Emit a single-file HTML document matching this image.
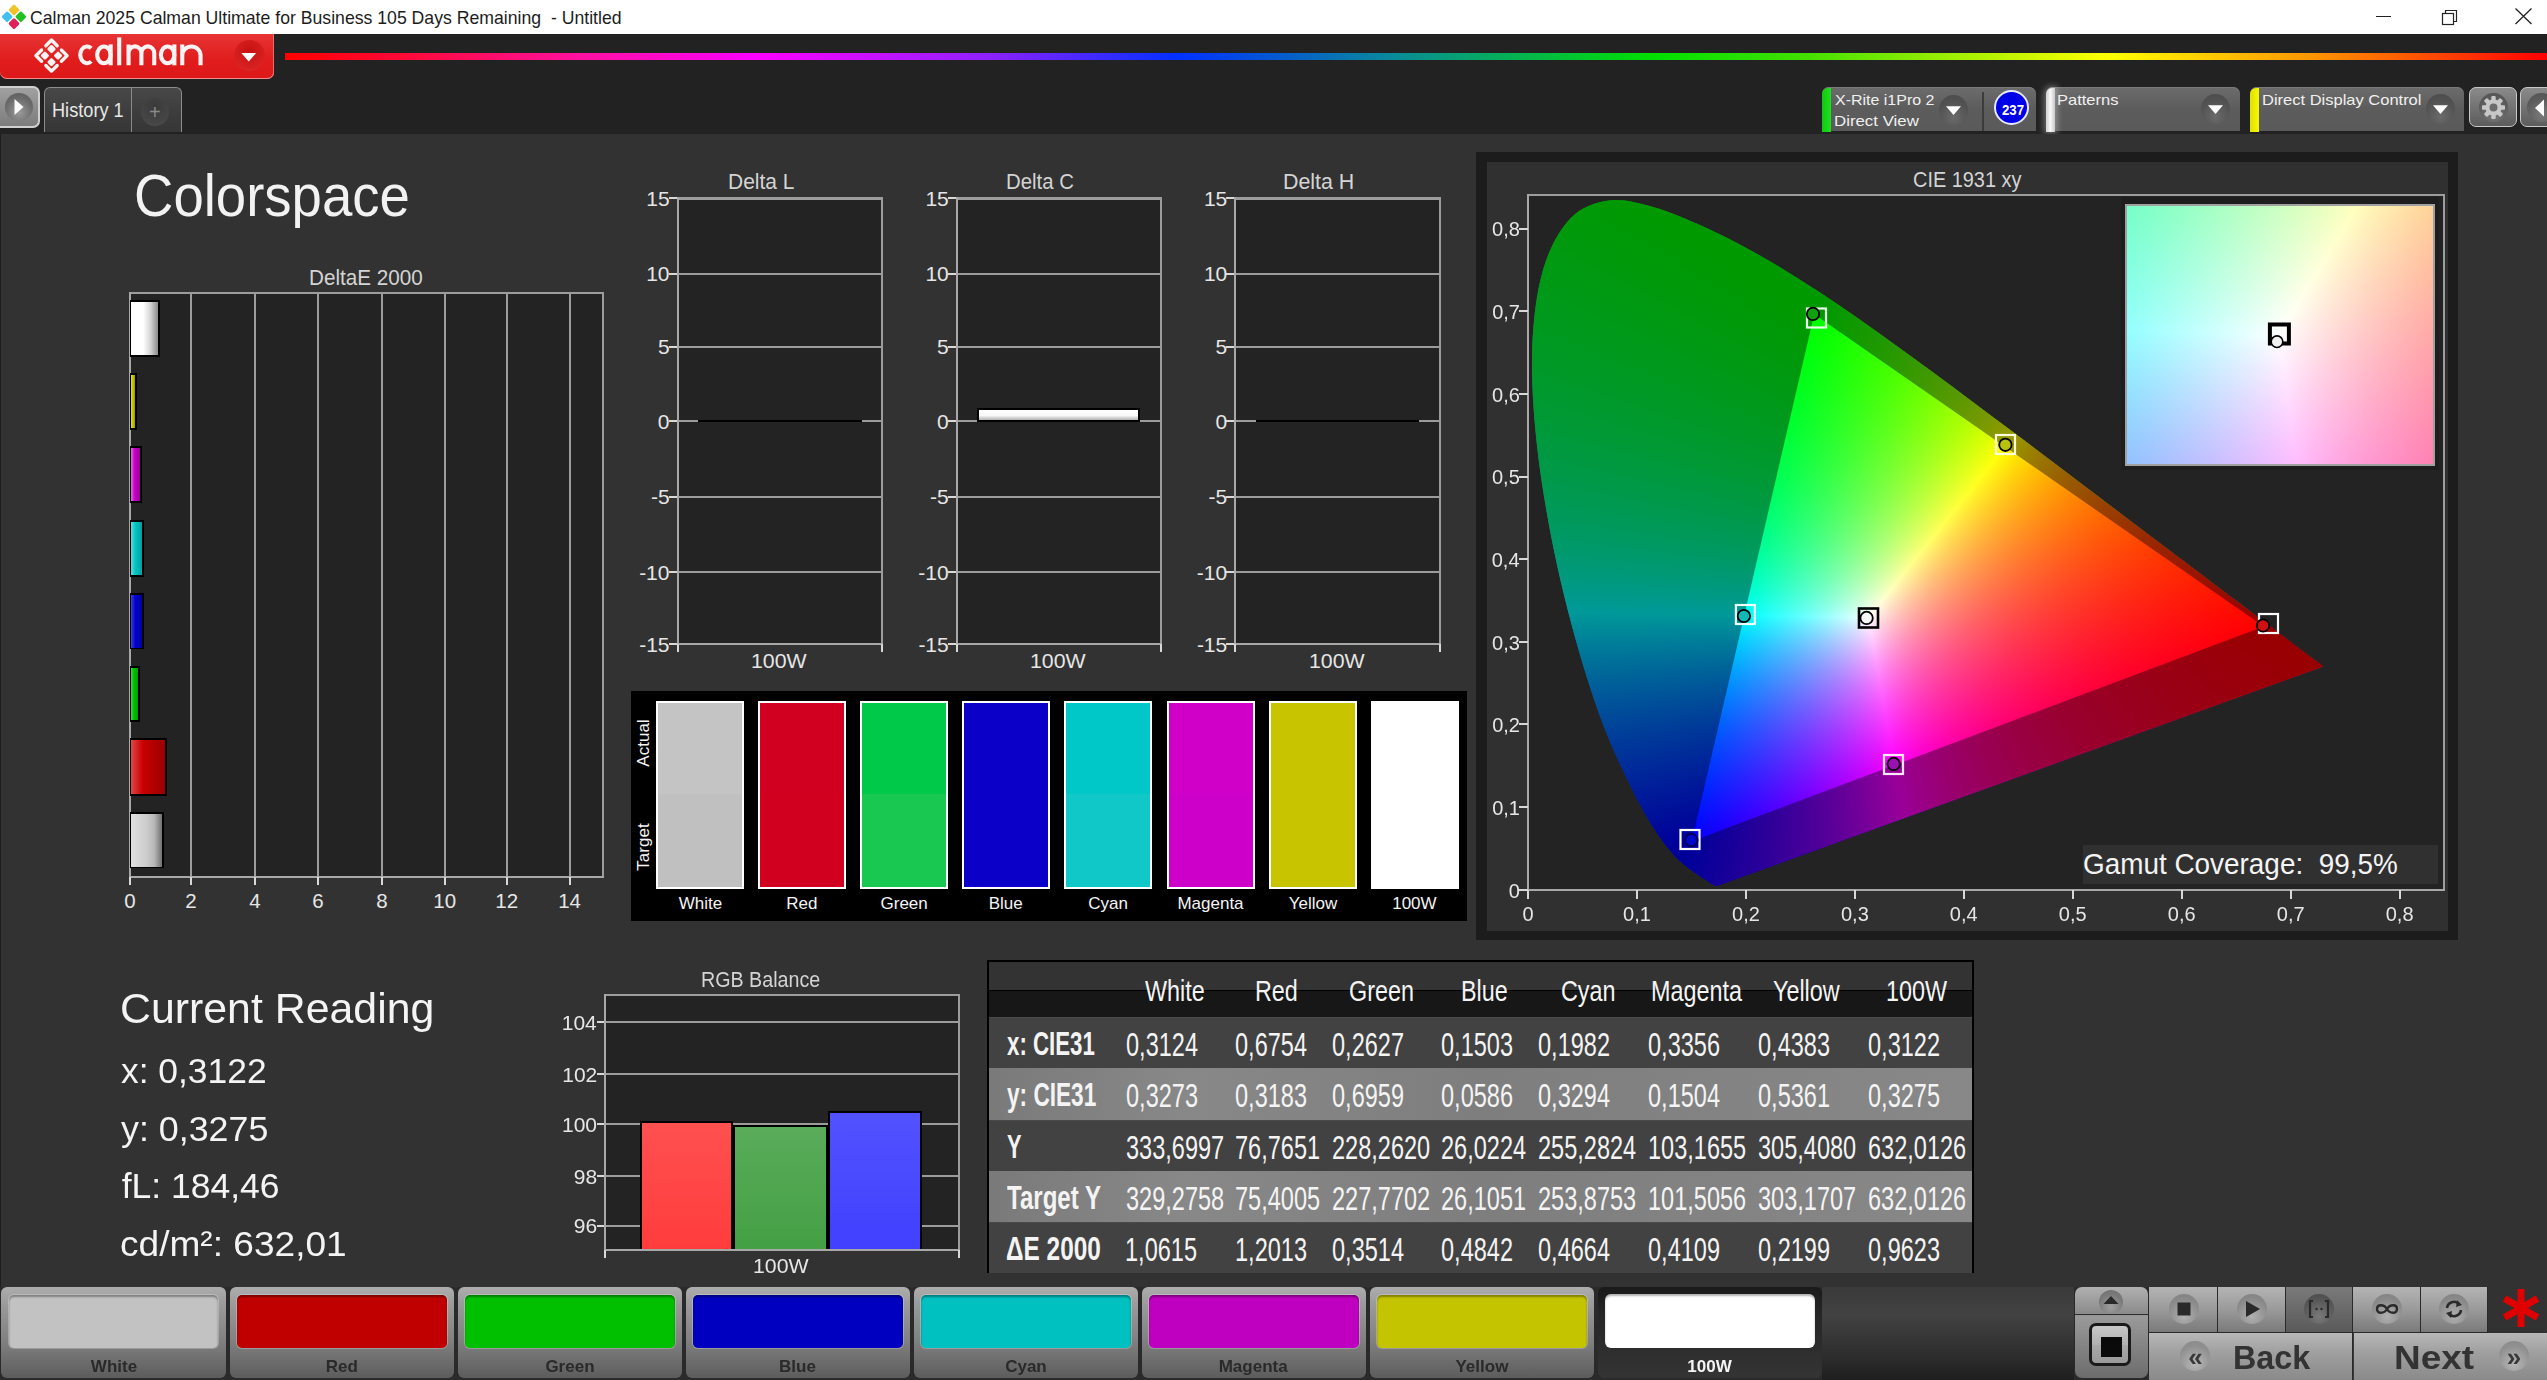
<!DOCTYPE html>
<html><head><meta charset="utf-8"><title>Calman</title><style>*{margin:0;padding:0;box-sizing:border-box}
html,body{width:2547px;height:1380px;overflow:hidden;background:#323232}
body{position:relative;font-family:"Liberation Sans",sans-serif}
.b{position:absolute}
.t{position:absolute;white-space:nowrap}
</style></head><body>
<div class="b" style="left:0.00px;top:0.00px;width:2547.00px;height:34.00px;background:#ffffff;"></div>
<svg class="b" style="left:0;top:0" width="30" height="34" viewBox="0 0 30 34">
<g transform="translate(14,16.8) rotate(45)">
<rect x="-9" y="-9" width="8.3" height="8.3" rx="1.5" fill="#f0c428"/>
<rect x="0.7" y="-9" width="8.3" height="8.3" rx="1.5" fill="#22c022"/>
<rect x="-9" y="0.7" width="8.3" height="8.3" rx="1.5" fill="#40c0f0"/>
<rect x="0.7" y="0.7" width="8.3" height="8.3" rx="1.5" fill="#e02058"/>
</g></svg>
<div class="t" style="left:30.12px;top:7.92px;font-size:19px;line-height:19px;color:#1c1c1c;transform:scaleX(0.9289);transform-origin:0 0;white-space:pre;">Calman 2025 Calman Ultimate for Business 105 Days Remaining  - Untitled</div>
<div class="b" style="left:2376.00px;top:16.00px;width:15.00px;height:1.20px;background:#222;"></div>
<svg class="b" style="left:2436px;top:4px" width="30" height="26" viewBox="0 0 30 26">
<rect x="6.5" y="9.5" width="11" height="11" fill="none" stroke="#222" stroke-width="1.2"/>
<path d="M9.5 9.5 V6.5 H20.5 V17.5 H17.5" fill="none" stroke="#222" stroke-width="1.2"/></svg>
<svg class="b" style="left:2510px;top:4px" width="28" height="26" viewBox="0 0 28 26">
<path d="M5.5 4.5 L21.5 20 M21.5 4.5 L5.5 20" stroke="#222" stroke-width="1.3"/></svg>
<div class="b" style="left:0.00px;top:34.00px;width:2547.00px;height:99.50px;background:#222222;"></div>
<div class="b" style="left:0.00px;top:34.00px;width:274.00px;height:44.50px;background:linear-gradient(#e83434,#e01c1c 60%,#dc1818);border-radius:0 0 7px 7px;box-shadow:inset 0 -1px 0 #f08a8a, inset -1px 0 0 #e86a6a;"></div>
<svg class="b" style="left:0;top:34px" width="274" height="44" viewBox="0 34 274 44">
<g transform="translate(51.5,55.6) rotate(45)" fill="none" stroke="#fff4f4" stroke-width="3.4" stroke-linecap="round" stroke-linejoin="round">
<path d="M-11 -3 V-11 H-3 M3 -11 H11 V-3 M11 3 V11 H3 M-3 11 H-11 V3"/>
<g fill="#fff4f4" stroke="none">
<rect x="-7.9" y="-7.9" width="6.5" height="6.5" rx="1.3"/><rect x="1.4" y="-7.9" width="6.5" height="6.5" rx="1.3"/>
<rect x="-7.9" y="1.4" width="6.5" height="6.5" rx="1.3"/><rect x="1.4" y="1.4" width="6.5" height="6.5" rx="1.3"/></g></g>
<g fill="none" stroke="#fff4f4" stroke-width="4.1">
<path d="M91.2 48.3 A6.75 8.4 0 1 0 91.2 61.4"/>
<ellipse cx="103.9" cy="54.85" rx="6.75" ry="8.4"/><path d="M110.65 44.4 V65.3"/>
<path d="M119.2 37.4 V65.3"/>
<path d="M128.55 44.4 V65.3 M128.55 53 A6.42 6.6 0 0 1 141.4 53 V65.3 M141.4 53 A6.42 6.6 0 0 1 154.25 53 V65.3"/>
<ellipse cx="167.6" cy="54.85" rx="6.75" ry="8.4"/><path d="M174.35 44.4 V65.3"/>
<path d="M182.25 44.4 V65.3 M182.25 55.5 A9.15 9.05 0 0 1 200.55 55.5 V65.3"/>
</g></svg>
<div class="b" style="left:233.5px;top:39.5px;width:31px;height:31px;border-radius:50%;background:radial-gradient(circle at 50% 35%,#c81010,#d82222 70%,#e03030);"></div>
<svg class="b" style="left:240px;top:51px" width="18" height="12" viewBox="0 0 18 12"><path d="M1.3 2 H16.2 L8.75 10.5 Z" fill="#fff"/></svg>
<div class="b" style="left:285.00px;top:52.50px;width:2262.00px;height:7.50px;background:linear-gradient(to right,#ff0000 0%,#ff0a40 6%,#ff10a0 13%,#ff00ff 20.9%,#9020ff 31%,#0030ff 39.5%,#0a8a9a 49%,#00e000 60.5%,#40e000 67%,#ffff00 80.6%,#ff9000 90%,#ff0000 100%);"></div>
<div class="b" style="left:0;top:86px;width:40px;height:42px;border-radius:0 7px 7px 0;border:2px solid #d0d0d0;border-left:none;background:linear-gradient(#a0a0a0,#7c7c7c);"></div>
<div class="b" style="left:4.5px;top:93px;width:28px;height:28px;border-radius:50%;background:radial-gradient(circle at 50% 70%,#9a9a9a,#6a6a6a 60%,#5a5a5a);"></div>
<svg class="b" style="left:12px;top:97px" width="14" height="20" viewBox="0 0 14 20"><path d="M2.5 2 L11.5 10 L2.5 18 Z" fill="#fafafa"/></svg>
<div class="b" style="left:43.5px;top:86.5px;width:138.5px;height:45.5px;border-radius:6px 6px 0 0;border:1.5px solid #8c8c8c;border-bottom:none;background:linear-gradient(#484848,#3c3c3c 60%,#363636);"></div>
<div class="b" style="left:130.80px;top:87.00px;width:1.20px;height:44.50px;background:#8a8a8a;"></div>
<div class="t" style="left:52.00px;top:100.25px;font-size:20.5px;line-height:20.5px;color:#e8e8e8;transform:scaleX(0.8861);transform-origin:0 0;">History 1</div>
<div class="b" style="left:140.5px;top:97.5px;width:28px;height:28px;border-radius:50%;background:radial-gradient(circle at 50% 30%,#3a3a3a,#464646 70%,#505050);"></div>
<div class="t" style="left:148.88px;top:102.07px;font-size:20px;line-height:20px;color:#8a8a8a;">+</div>
<div class="b" style="left:1821.9px;top:86.8px;width:214.0px;height:44.6px;border-radius:7px 7px 0 0;background:linear-gradient(#6c6c6c,#5c5c5c 50%,#5a5a5a);box-shadow:inset 0 1px 0 #7a7a7a;"></div>
<div class="b" style="left:1821.9px;top:87.5px;width:9px;height:44px;border-radius:6px 0 0 0;background:linear-gradient(to right,#10c810,#20e020);"></div>
<div class="b" style="left:1982.00px;top:92.00px;width:1.50px;height:39.00px;background:#3c3c3c;"></div>
<div class="t" style="left:1834.64px;top:91.50px;font-size:15px;line-height:15px;color:#f0f0f0;transform:scaleX(1.0645);transform-origin:0 0;">X-Rite i1Pro 2</div>
<div class="t" style="left:1833.61px;top:112.80px;font-size:15px;line-height:15px;color:#f0f0f0;transform:scaleX(1.1223);transform-origin:0 0;">Direct View</div>
<div class="b" style="left:1938.5px;top:95px;width:29px;height:30px;border-radius:50%;background:radial-gradient(circle at 50% 75%,#6a6a6a,#525252 60%,#4a4a4a);"></div>
<svg class="b" style="left:1944.5px;top:105px" width="17" height="11" viewBox="0 0 17 11"><path d="M1 1.2 H16 L8.5 10 Z" fill="#fff"/></svg>
<div class="b" style="left:1993.5px;top:89.5px;width:35px;height:35px;border-radius:50%;background:#0000e8;border:2px solid #e8e8ff;"></div>
<div class="t" style="left:2002.04px;top:102.10px;font-size:15px;line-height:15px;color:#ffffff;font-weight:bold;transform:scaleX(0.8805);transform-origin:0 0;">237</div>
<div class="b" style="left:2046px;top:86.8px;width:193.80000000000018px;height:44.6px;border-radius:7px 7px 0 0;background:linear-gradient(#6c6c6c,#5c5c5c 50%,#5a5a5a);box-shadow:inset 0 1px 0 #7a7a7a;"></div>
<div class="b" style="left:2046px;top:87.5px;width:9px;height:44px;border-radius:6px 0 0 0;background:linear-gradient(to right,#d0d0d0,#f8f8f8 50%,#c8c8c8);box-shadow:0 0 6px 2px rgba(255,255,255,0.35);"></div>
<div class="t" style="left:2057.34px;top:91.50px;font-size:15px;line-height:15px;color:#f0f0f0;transform:scaleX(1.0996);transform-origin:0 0;">Patterns</div>
<div class="b" style="left:2201.2px;top:94px;width:29px;height:30px;border-radius:50%;background:radial-gradient(circle at 50% 75%,#6a6a6a,#525252 60%,#4a4a4a);"></div>
<svg class="b" style="left:2207.2px;top:104px" width="17" height="11" viewBox="0 0 17 11"><path d="M1 1.2 H16 L8.5 10 Z" fill="#fff"/></svg>
<div class="b" style="left:2249.5px;top:86.8px;width:214.4000000000001px;height:44.6px;border-radius:7px 7px 0 0;background:linear-gradient(#6c6c6c,#5c5c5c 50%,#5a5a5a);box-shadow:inset 0 1px 0 #7a7a7a;"></div>
<div class="b" style="left:2249.5px;top:87.5px;width:9px;height:44px;border-radius:6px 0 0 0;background:linear-gradient(to right,#e0e000,#f8f800);"></div>
<div class="t" style="left:2261.54px;top:91.50px;font-size:15px;line-height:15px;color:#f0f0f0;transform:scaleX(1.0994);transform-origin:0 0;">Direct Display Control</div>
<div class="b" style="left:2425.5px;top:94px;width:29px;height:30px;border-radius:50%;background:radial-gradient(circle at 50% 75%,#6a6a6a,#525252 60%,#4a4a4a);"></div>
<svg class="b" style="left:2431.5px;top:104px" width="17" height="11" viewBox="0 0 17 11"><path d="M1 1.2 H16 L8.5 10 Z" fill="#fff"/></svg>
<div class="b" style="left:2469px;top:86.8px;width:48px;height:40px;border-radius:7px;border:1.5px solid #c8c8c8;background:linear-gradient(#8a8a8a,#5c5c5c);"></div>
<div class="b" style="left:2479px;top:93px;width:29px;height:29px;border-radius:50%;background:radial-gradient(circle at 50% 75%,#7a7a7a,#5a5a5a 65%,#505050);"></div>
<svg class="b" style="left:2480px;top:94px" width="27" height="27" viewBox="-13.5 -13.5 27 27">
<g fill="#c8c8c8"><circle r="8"/>
<rect x="-2.2" y="-11.5" width="4.4" height="23" rx="1"/>
<rect x="-2.2" y="-11.5" width="4.4" height="23" rx="1" transform="rotate(45)"/>
<rect x="-2.2" y="-11.5" width="4.4" height="23" rx="1" transform="rotate(90)"/>
<rect x="-2.2" y="-11.5" width="4.4" height="23" rx="1" transform="rotate(135)"/>
</g><circle r="4" fill="#6c6c6c"/></svg>
<div class="b" style="left:2520px;top:86.8px;width:40px;height:40px;border-radius:7px;border:1.5px solid #c8c8c8;background:linear-gradient(#8a8a8a,#5c5c5c);"></div>
<div class="b" style="left:2527px;top:93px;width:29px;height:29px;border-radius:50%;background:radial-gradient(circle at 50% 75%,#7a7a7a,#5a5a5a 65%,#505050);"></div>
<svg class="b" style="left:2532px;top:98px" width="15" height="20" viewBox="0 0 15 20"><path d="M12 1.5 L3 10 L12 18.5 Z" fill="#fafafa"/></svg>
<div class="b" style="left:0.00px;top:133.50px;width:2547.00px;height:1153.00px;background:#323232;"></div>
<div class="b" style="left:0.00px;top:133.50px;width:1.00px;height:1153.00px;background:#1e1e1e;"></div>
<div class="t" style="left:133.97px;top:165.81px;font-size:60px;line-height:60px;color:#f2f2f2;transform:scaleX(0.9090);transform-origin:0 0;">Colorspace</div>
<div class="t" style="left:309.29px;top:267.38px;font-size:22px;line-height:22px;color:#d4d4d4;transform:scaleX(0.9399);transform-origin:0 0;">DeltaE 2000</div>
<div class="b" style="left:129.00px;top:292.00px;width:475.00px;height:586.00px;background:#232323;"></div>
<div class="b" style="left:190.00px;top:292.00px;width:2.00px;height:585.00px;background:#9c9c9c;"></div>
<div class="b" style="left:254.00px;top:292.00px;width:2.00px;height:585.00px;background:#9c9c9c;"></div>
<div class="b" style="left:317.00px;top:292.00px;width:2.00px;height:585.00px;background:#9c9c9c;"></div>
<div class="b" style="left:381.00px;top:292.00px;width:2.00px;height:585.00px;background:#9c9c9c;"></div>
<div class="b" style="left:444.00px;top:292.00px;width:2.00px;height:585.00px;background:#9c9c9c;"></div>
<div class="b" style="left:506.00px;top:292.00px;width:2.00px;height:585.00px;background:#9c9c9c;"></div>
<div class="b" style="left:569.00px;top:292.00px;width:2.00px;height:585.00px;background:#9c9c9c;"></div>
<div class="b" style="left:129.00px;top:292.00px;width:475.00px;height:2.00px;background:#9c9c9c;"></div>
<div class="b" style="left:602.00px;top:292.00px;width:2.00px;height:586.00px;background:#9c9c9c;"></div>
<div class="b" style="left:129.00px;top:292.00px;width:2.00px;height:586.00px;background:#a8a8a8;"></div>
<div class="b" style="left:129.00px;top:876.00px;width:475.00px;height:2.00px;background:#a8a8a8;"></div>
<div class="b" style="left:129.00px;top:877.00px;width:2.00px;height:8.00px;background:#d8d8d8;"></div>
<div class="t" style="left:124.29px;top:890.95px;font-size:20.5px;line-height:20.5px;color:#e6e6e6;">0</div>
<div class="b" style="left:190.00px;top:877.00px;width:2.00px;height:8.00px;background:#d8d8d8;"></div>
<div class="t" style="left:185.31px;top:890.95px;font-size:20.5px;line-height:20.5px;color:#e6e6e6;">2</div>
<div class="b" style="left:254.00px;top:877.00px;width:2.00px;height:8.00px;background:#d8d8d8;"></div>
<div class="t" style="left:249.36px;top:890.95px;font-size:20.5px;line-height:20.5px;color:#e6e6e6;">4</div>
<div class="b" style="left:317.00px;top:877.00px;width:2.00px;height:8.00px;background:#d8d8d8;"></div>
<div class="t" style="left:312.23px;top:890.95px;font-size:20.5px;line-height:20.5px;color:#e6e6e6;">6</div>
<div class="b" style="left:381.00px;top:877.00px;width:2.00px;height:8.00px;background:#d8d8d8;"></div>
<div class="t" style="left:376.31px;top:890.95px;font-size:20.5px;line-height:20.5px;color:#e6e6e6;">8</div>
<div class="b" style="left:444.00px;top:877.00px;width:2.00px;height:8.00px;background:#d8d8d8;"></div>
<div class="t" style="left:433.24px;top:890.95px;font-size:20.5px;line-height:20.5px;color:#e6e6e6;">10</div>
<div class="b" style="left:506.00px;top:877.00px;width:2.00px;height:8.00px;background:#d8d8d8;"></div>
<div class="t" style="left:495.37px;top:890.95px;font-size:20.5px;line-height:20.5px;color:#e6e6e6;">12</div>
<div class="b" style="left:569.00px;top:877.00px;width:2.00px;height:8.00px;background:#d8d8d8;"></div>
<div class="t" style="left:558.14px;top:890.95px;font-size:20.5px;line-height:20.5px;color:#e6e6e6;">14</div>
<div class="b" style="left:130.00px;top:300.00px;width:30.00px;height:57.00px;background:#000;"></div>
<div class="b" style="left:131.00px;top:301.80px;width:27.20px;height:53.40px;background:linear-gradient(to right,#ffffff,#ffffff 45%,#d8d8d8 70%,#8a8a8a);"></div>
<div class="b" style="left:130.00px;top:373.00px;width:6.50px;height:57.00px;background:#000;"></div>
<div class="b" style="left:131.00px;top:374.80px;width:3.70px;height:53.40px;background:linear-gradient(to right,#d8d860,#c8c800 40%,#9a9a00);"></div>
<div class="b" style="left:130.00px;top:446.00px;width:11.50px;height:57.00px;background:#000;"></div>
<div class="b" style="left:131.00px;top:447.80px;width:8.70px;height:53.40px;background:linear-gradient(to right,#e070e0,#c800c8 40%,#9a009a);"></div>
<div class="b" style="left:130.00px;top:520.00px;width:13.50px;height:56.50px;background:#000;"></div>
<div class="b" style="left:131.00px;top:521.80px;width:10.70px;height:52.90px;background:linear-gradient(to right,#60d8d8,#00c4c4 40%,#00a0a0);"></div>
<div class="b" style="left:130.00px;top:592.70px;width:14.00px;height:56.80px;background:#000;"></div>
<div class="b" style="left:131.00px;top:594.50px;width:11.20px;height:53.20px;background:linear-gradient(to right,#4040e0,#0000c8 40%,#0000a0);"></div>
<div class="b" style="left:130.00px;top:665.70px;width:9.50px;height:56.30px;background:#000;"></div>
<div class="b" style="left:131.00px;top:667.50px;width:6.70px;height:52.70px;background:linear-gradient(to right,#40d840,#00c000 40%,#00a000);"></div>
<div class="b" style="left:130.00px;top:738.00px;width:37.00px;height:57.50px;background:#000;"></div>
<div class="b" style="left:131.00px;top:739.80px;width:34.20px;height:53.90px;background:linear-gradient(to right,#e04848,#c80000 35%,#9a0000);"></div>
<div class="b" style="left:130.00px;top:811.70px;width:33.50px;height:56.80px;background:#000;"></div>
<div class="b" style="left:131.00px;top:813.50px;width:30.70px;height:53.20px;background:linear-gradient(to right,#e0e0e0,#cccccc 50%,#b8b8b8 75%,#707070);"></div>
<div class="t" style="left:727.57px;top:171.28px;font-size:22px;line-height:22px;color:#d4d4d4;transform:scaleX(0.9545);transform-origin:0 0;">Delta L</div>
<div class="b" style="left:677.70px;top:198.00px;width:205.20px;height:447.40px;background:#232323;"></div>
<div class="b" style="left:668.70px;top:197.00px;width:9.00px;height:2.00px;background:#d8d8d8;"></div>
<div class="t" style="left:646.23px;top:187.52px;font-size:21px;line-height:21px;color:#e6e6e6;">15</div>
<div class="b" style="left:677.70px;top:272.80px;width:204.20px;height:2.00px;background:#9c9c9c;"></div>
<div class="b" style="left:668.70px;top:272.80px;width:9.00px;height:2.00px;background:#d8d8d8;"></div>
<div class="t" style="left:646.18px;top:263.32px;font-size:21px;line-height:21px;color:#e6e6e6;">10</div>
<div class="b" style="left:677.70px;top:345.60px;width:204.20px;height:2.00px;background:#9c9c9c;"></div>
<div class="b" style="left:668.70px;top:345.60px;width:9.00px;height:2.00px;background:#d8d8d8;"></div>
<div class="t" style="left:657.88px;top:336.12px;font-size:21px;line-height:21px;color:#e6e6e6;">5</div>
<div class="b" style="left:677.70px;top:420.20px;width:204.20px;height:2.00px;background:#9c9c9c;"></div>
<div class="b" style="left:668.70px;top:420.20px;width:9.00px;height:2.00px;background:#d8d8d8;"></div>
<div class="t" style="left:657.83px;top:410.72px;font-size:21px;line-height:21px;color:#e6e6e6;">0</div>
<div class="b" style="left:677.70px;top:495.60px;width:204.20px;height:2.00px;background:#9c9c9c;"></div>
<div class="b" style="left:668.70px;top:495.60px;width:9.00px;height:2.00px;background:#d8d8d8;"></div>
<div class="t" style="left:650.90px;top:486.12px;font-size:21px;line-height:21px;color:#e6e6e6;">-5</div>
<div class="b" style="left:677.70px;top:571.00px;width:204.20px;height:2.00px;background:#9c9c9c;"></div>
<div class="b" style="left:668.70px;top:571.00px;width:9.00px;height:2.00px;background:#d8d8d8;"></div>
<div class="t" style="left:639.14px;top:561.52px;font-size:21px;line-height:21px;color:#e6e6e6;">-10</div>
<div class="b" style="left:668.70px;top:643.40px;width:9.00px;height:2.00px;background:#d8d8d8;"></div>
<div class="t" style="left:639.20px;top:633.92px;font-size:21px;line-height:21px;color:#e6e6e6;">-15</div>
<div class="b" style="left:676.70px;top:196.50px;width:206.20px;height:3.00px;background:#9c9c9c;"></div>
<div class="b" style="left:880.90px;top:198.00px;width:2.00px;height:447.40px;background:#9c9c9c;"></div>
<div class="b" style="left:676.70px;top:196.50px;width:2.00px;height:448.90px;background:#a8a8a8;"></div>
<div class="b" style="left:676.70px;top:643.40px;width:206.20px;height:2.00px;background:#a8a8a8;"></div>
<div class="b" style="left:676.70px;top:644.40px;width:2.00px;height:7.60px;background:#d8d8d8;"></div>
<div class="b" style="left:880.90px;top:644.40px;width:2.00px;height:7.60px;background:#d8d8d8;"></div>
<div class="t" style="left:751.15px;top:649.72px;font-size:21px;line-height:21px;color:#e6e6e6;transform:scaleX(1.0135);transform-origin:0 0;">100W</div>
<div class="b" style="left:698.20px;top:420.20px;width:163.50px;height:2.00px;background:#000;"></div>
<div class="t" style="left:1005.92px;top:171.28px;font-size:22px;line-height:22px;color:#d4d4d4;transform:scaleX(0.9261);transform-origin:0 0;">Delta C</div>
<div class="b" style="left:956.90px;top:198.00px;width:205.20px;height:447.40px;background:#232323;"></div>
<div class="b" style="left:947.90px;top:197.00px;width:9.00px;height:2.00px;background:#d8d8d8;"></div>
<div class="t" style="left:925.43px;top:187.52px;font-size:21px;line-height:21px;color:#e6e6e6;">15</div>
<div class="b" style="left:956.90px;top:272.80px;width:204.20px;height:2.00px;background:#9c9c9c;"></div>
<div class="b" style="left:947.90px;top:272.80px;width:9.00px;height:2.00px;background:#d8d8d8;"></div>
<div class="t" style="left:925.38px;top:263.32px;font-size:21px;line-height:21px;color:#e6e6e6;">10</div>
<div class="b" style="left:956.90px;top:345.60px;width:204.20px;height:2.00px;background:#9c9c9c;"></div>
<div class="b" style="left:947.90px;top:345.60px;width:9.00px;height:2.00px;background:#d8d8d8;"></div>
<div class="t" style="left:937.08px;top:336.12px;font-size:21px;line-height:21px;color:#e6e6e6;">5</div>
<div class="b" style="left:956.90px;top:420.20px;width:204.20px;height:2.00px;background:#9c9c9c;"></div>
<div class="b" style="left:947.90px;top:420.20px;width:9.00px;height:2.00px;background:#d8d8d8;"></div>
<div class="t" style="left:937.03px;top:410.72px;font-size:21px;line-height:21px;color:#e6e6e6;">0</div>
<div class="b" style="left:956.90px;top:495.60px;width:204.20px;height:2.00px;background:#9c9c9c;"></div>
<div class="b" style="left:947.90px;top:495.60px;width:9.00px;height:2.00px;background:#d8d8d8;"></div>
<div class="t" style="left:930.10px;top:486.12px;font-size:21px;line-height:21px;color:#e6e6e6;">-5</div>
<div class="b" style="left:956.90px;top:571.00px;width:204.20px;height:2.00px;background:#9c9c9c;"></div>
<div class="b" style="left:947.90px;top:571.00px;width:9.00px;height:2.00px;background:#d8d8d8;"></div>
<div class="t" style="left:918.34px;top:561.52px;font-size:21px;line-height:21px;color:#e6e6e6;">-10</div>
<div class="b" style="left:947.90px;top:643.40px;width:9.00px;height:2.00px;background:#d8d8d8;"></div>
<div class="t" style="left:918.39px;top:633.92px;font-size:21px;line-height:21px;color:#e6e6e6;">-15</div>
<div class="b" style="left:955.90px;top:196.50px;width:206.20px;height:3.00px;background:#9c9c9c;"></div>
<div class="b" style="left:1160.10px;top:198.00px;width:2.00px;height:447.40px;background:#9c9c9c;"></div>
<div class="b" style="left:955.90px;top:196.50px;width:2.00px;height:448.90px;background:#a8a8a8;"></div>
<div class="b" style="left:955.90px;top:643.40px;width:206.20px;height:2.00px;background:#a8a8a8;"></div>
<div class="b" style="left:955.90px;top:644.40px;width:2.00px;height:7.60px;background:#d8d8d8;"></div>
<div class="b" style="left:1160.10px;top:644.40px;width:2.00px;height:7.60px;background:#d8d8d8;"></div>
<div class="t" style="left:1030.35px;top:649.72px;font-size:21px;line-height:21px;color:#e6e6e6;transform:scaleX(1.0135);transform-origin:0 0;">100W</div>
<div class="b" style="left:977.10px;top:407.70px;width:162.60px;height:14.70px;background:#000;"></div>
<div class="b" style="left:979.00px;top:409.60px;width:158.80px;height:10.90px;background:linear-gradient(#ffffff,#f8f8f8 55%,#b0b0b0);"></div>
<div class="t" style="left:1282.64px;top:171.28px;font-size:22px;line-height:22px;color:#d4d4d4;transform:scaleX(0.9722);transform-origin:0 0;">Delta H</div>
<div class="b" style="left:1235.40px;top:198.00px;width:205.20px;height:447.40px;background:#232323;"></div>
<div class="b" style="left:1226.40px;top:197.00px;width:9.00px;height:2.00px;background:#d8d8d8;"></div>
<div class="t" style="left:1203.93px;top:187.52px;font-size:21px;line-height:21px;color:#e6e6e6;">15</div>
<div class="b" style="left:1235.40px;top:272.80px;width:204.20px;height:2.00px;background:#9c9c9c;"></div>
<div class="b" style="left:1226.40px;top:272.80px;width:9.00px;height:2.00px;background:#d8d8d8;"></div>
<div class="t" style="left:1203.88px;top:263.32px;font-size:21px;line-height:21px;color:#e6e6e6;">10</div>
<div class="b" style="left:1235.40px;top:345.60px;width:204.20px;height:2.00px;background:#9c9c9c;"></div>
<div class="b" style="left:1226.40px;top:345.60px;width:9.00px;height:2.00px;background:#d8d8d8;"></div>
<div class="t" style="left:1215.59px;top:336.12px;font-size:21px;line-height:21px;color:#e6e6e6;">5</div>
<div class="b" style="left:1235.40px;top:420.20px;width:204.20px;height:2.00px;background:#9c9c9c;"></div>
<div class="b" style="left:1226.40px;top:420.20px;width:9.00px;height:2.00px;background:#d8d8d8;"></div>
<div class="t" style="left:1215.53px;top:410.72px;font-size:21px;line-height:21px;color:#e6e6e6;">0</div>
<div class="b" style="left:1235.40px;top:495.60px;width:204.20px;height:2.00px;background:#9c9c9c;"></div>
<div class="b" style="left:1226.40px;top:495.60px;width:9.00px;height:2.00px;background:#d8d8d8;"></div>
<div class="t" style="left:1208.60px;top:486.12px;font-size:21px;line-height:21px;color:#e6e6e6;">-5</div>
<div class="b" style="left:1235.40px;top:571.00px;width:204.20px;height:2.00px;background:#9c9c9c;"></div>
<div class="b" style="left:1226.40px;top:571.00px;width:9.00px;height:2.00px;background:#d8d8d8;"></div>
<div class="t" style="left:1196.84px;top:561.52px;font-size:21px;line-height:21px;color:#e6e6e6;">-10</div>
<div class="b" style="left:1226.40px;top:643.40px;width:9.00px;height:2.00px;background:#d8d8d8;"></div>
<div class="t" style="left:1196.89px;top:633.92px;font-size:21px;line-height:21px;color:#e6e6e6;">-15</div>
<div class="b" style="left:1234.40px;top:196.50px;width:206.20px;height:3.00px;background:#9c9c9c;"></div>
<div class="b" style="left:1438.60px;top:198.00px;width:2.00px;height:447.40px;background:#9c9c9c;"></div>
<div class="b" style="left:1234.40px;top:196.50px;width:2.00px;height:448.90px;background:#a8a8a8;"></div>
<div class="b" style="left:1234.40px;top:643.40px;width:206.20px;height:2.00px;background:#a8a8a8;"></div>
<div class="b" style="left:1234.40px;top:644.40px;width:2.00px;height:7.60px;background:#d8d8d8;"></div>
<div class="b" style="left:1438.60px;top:644.40px;width:2.00px;height:7.60px;background:#d8d8d8;"></div>
<div class="t" style="left:1308.85px;top:649.72px;font-size:21px;line-height:21px;color:#e6e6e6;transform:scaleX(1.0135);transform-origin:0 0;">100W</div>
<div class="b" style="left:1255.90px;top:420.20px;width:163.50px;height:2.00px;background:#000;"></div>
<div class="b" style="left:631.00px;top:691.20px;width:836.20px;height:229.80px;background:#000;"></div>
<div class="b" style="left:656.20px;top:701.20px;width:88.00px;height:187.50px;background:#ffffff;"></div>
<div class="b" style="left:658.20px;top:703.20px;width:84.00px;height:90.80px;background:#c4c4c4;"></div>
<div class="b" style="left:658.20px;top:794.00px;width:84.00px;height:92.70px;background:#c0c0c0;"></div>
<div class="t" style="left:678.80px;top:895.31px;font-size:17px;line-height:17px;color:#f4f4f4;">White</div>
<div class="b" style="left:758.00px;top:701.20px;width:88.00px;height:187.50px;background:#ffffff;"></div>
<div class="b" style="left:760.00px;top:703.20px;width:84.00px;height:90.80px;background:#d20020;"></div>
<div class="b" style="left:760.00px;top:794.00px;width:84.00px;height:92.70px;background:#d0001e;"></div>
<div class="t" style="left:786.25px;top:895.31px;font-size:17px;line-height:17px;color:#f4f4f4;">Red</div>
<div class="b" style="left:860.00px;top:701.20px;width:88.00px;height:187.50px;background:#ffffff;"></div>
<div class="b" style="left:862.00px;top:703.20px;width:84.00px;height:90.80px;background:#00c94a;"></div>
<div class="b" style="left:862.00px;top:794.00px;width:84.00px;height:92.70px;background:#18c850;"></div>
<div class="t" style="left:880.50px;top:895.31px;font-size:17px;line-height:17px;color:#f4f4f4;">Green</div>
<div class="b" style="left:962.00px;top:701.20px;width:88.00px;height:187.50px;background:#ffffff;"></div>
<div class="b" style="left:964.00px;top:703.20px;width:84.00px;height:90.80px;background:#0a00c8;"></div>
<div class="b" style="left:964.00px;top:794.00px;width:84.00px;height:92.70px;background:#0a00c8;"></div>
<div class="t" style="left:988.66px;top:895.31px;font-size:17px;line-height:17px;color:#f4f4f4;">Blue</div>
<div class="b" style="left:1064.00px;top:701.20px;width:88.00px;height:187.50px;background:#ffffff;"></div>
<div class="b" style="left:1066.00px;top:703.20px;width:84.00px;height:90.80px;background:#00c8c8;"></div>
<div class="b" style="left:1066.00px;top:794.00px;width:84.00px;height:92.70px;background:#10c8c8;"></div>
<div class="t" style="left:1088.28px;top:895.31px;font-size:17px;line-height:17px;color:#f4f4f4;">Cyan</div>
<div class="b" style="left:1167.20px;top:701.20px;width:88.00px;height:187.50px;background:#ffffff;"></div>
<div class="b" style="left:1169.20px;top:703.20px;width:84.00px;height:90.80px;background:#d000c8;"></div>
<div class="b" style="left:1169.20px;top:794.00px;width:84.00px;height:92.70px;background:#cc00c8;"></div>
<div class="t" style="left:1177.41px;top:895.31px;font-size:17px;line-height:17px;color:#f4f4f4;">Magenta</div>
<div class="b" style="left:1269.20px;top:701.20px;width:88.00px;height:187.50px;background:#ffffff;"></div>
<div class="b" style="left:1271.20px;top:703.20px;width:84.00px;height:90.80px;background:#c8c400;"></div>
<div class="b" style="left:1271.20px;top:794.00px;width:84.00px;height:92.70px;background:#c8c400;"></div>
<div class="t" style="left:1288.72px;top:895.31px;font-size:17px;line-height:17px;color:#f4f4f4;">Yellow</div>
<div class="b" style="left:1371.00px;top:701.20px;width:88.00px;height:187.50px;background:#ffffff;"></div>
<div class="b" style="left:1373.00px;top:703.20px;width:84.00px;height:90.80px;background:#ffffff;"></div>
<div class="b" style="left:1373.00px;top:794.00px;width:84.00px;height:92.70px;background:#ffffff;"></div>
<div class="t" style="left:1392.20px;top:895.31px;font-size:17px;line-height:17px;color:#f4f4f4;">100W</div>
<div class="t" style="left:619.5px;top:733px;width:48px;height:20px;font-size:17px;line-height:20px;color:#f4f4f4;text-align:center;transform:rotate(-90deg);transform-origin:50% 50%;">Actual</div>
<div class="t" style="left:619.5px;top:837px;width:48px;height:20px;font-size:17px;line-height:20px;color:#f4f4f4;text-align:center;transform:rotate(-90deg);transform-origin:50% 50%;">Target</div>
<div class="b" style="left:1476.00px;top:152.00px;width:982.00px;height:788.00px;background:#1c1c1c;"></div>
<div class="b" style="left:1486.50px;top:162.00px;width:961.50px;height:769.00px;background:#303030;"></div>
<div class="b" style="left:1528.00px;top:195.20px;width:916.00px;height:694.60px;background:#232323;"></div>
<svg class="b" style="left:0;top:0" width="2547" height="1380" viewBox="0 0 2547 1380">
<defs>
<linearGradient id="lg1" gradientUnits="userSpaceOnUse" x1="0" y1="200" x2="0" y2="886">
<stop offset="0" stop-color="#009900"/><stop offset="0.45" stop-color="#00955a"/><stop offset="0.6" stop-color="#009890"/>
<stop offset="0.75" stop-color="#00508f"/><stop offset="1" stop-color="#0000a0"/></linearGradient>
<linearGradient id="lg2" gradientUnits="userSpaceOnUse" x1="1700" y1="0" x2="2330" y2="0">
<stop offset="0" stop-color="#10009a"/><stop offset="0.4" stop-color="#8a0090"/><stop offset="1" stop-color="#a00000"/></linearGradient>
<linearGradient id="lg3" gradientUnits="userSpaceOnUse" x1="1816" y1="0" x2="2322" y2="0">
<stop offset="0" stop-color="#109a00"/><stop offset="0.4" stop-color="#789000"/><stop offset="1" stop-color="#a00000"/></linearGradient>
<linearGradient id="lg4" gradientUnits="userSpaceOnUse" x1="1692" y1="0" x2="2264" y2="0">
<stop offset="0" stop-color="#00a0ff"/><stop offset="0.3" stop-color="#c0e0ff"/><stop offset="0.55" stop-color="#ff60a0"/><stop offset="1" stop-color="#ff0000"/></linearGradient>
<linearGradient id="lg5" gradientUnits="userSpaceOnUse" x1="0" y1="315" x2="0" y2="841">
<stop offset="0" stop-color="#00ff00" stop-opacity="1"/><stop offset="0.45" stop-color="#e0ff40" stop-opacity="0.6"/><stop offset="0.75" stop-color="#ffffff" stop-opacity="0"/><stop offset="1" stop-color="#2020ff" stop-opacity="0.9"/></linearGradient>
<clipPath id="locclip"><path d="M1717.7 885.7 C1717.7 885.7 1717.6 885.7 1717.6 885.7 C1717.5 885.7 1717.4 885.7 1717.4 885.7 C1717.3 885.8 1717.2 885.7 1717.1 885.7 C1717.0 885.8 1716.9 885.8 1716.8 885.8 C1716.7 885.8 1716.6 885.8 1716.5 885.8 C1716.4 885.8 1716.2 885.8 1716.0 885.8 C1715.9 885.8 1715.7 885.9 1715.5 885.8 C1715.3 885.8 1715.1 885.7 1714.7 885.6 C1714.4 885.4 1714.0 885.3 1713.5 885.0 C1713.1 884.8 1712.6 884.5 1712.0 884.1 C1711.4 883.7 1710.7 883.2 1709.8 882.7 C1709.0 882.1 1708.2 881.5 1707.1 880.8 C1706.1 880.1 1704.9 879.3 1703.5 878.4 C1702.1 877.5 1700.4 876.4 1698.6 875.2 C1696.8 873.9 1694.8 872.7 1692.5 871.0 C1690.2 869.4 1687.7 867.6 1684.9 865.2 C1682.1 862.9 1679.2 860.7 1675.6 856.8 C1672.0 852.9 1667.9 848.5 1663.2 842.0 C1658.5 835.6 1653.4 828.4 1647.4 818.1 C1641.5 807.7 1634.9 795.8 1627.5 780.1 C1620.0 764.4 1611.2 746.3 1602.8 723.9 C1594.5 701.5 1585.7 675.2 1577.5 646.0 C1569.3 616.7 1560.4 582.2 1553.6 548.7 C1546.8 515.1 1540.5 478.1 1536.9 444.8 C1533.4 411.4 1531.2 377.7 1532.2 348.5 C1533.3 319.4 1536.8 291.3 1543.1 269.7 C1549.5 248.0 1559.4 230.1 1570.4 218.6 C1581.3 207.1 1595.3 202.5 1608.9 200.6 C1622.6 198.6 1637.8 203.0 1652.4 206.9 C1667.0 210.7 1682.3 217.5 1696.5 223.6 C1710.8 229.8 1724.6 236.6 1738.2 243.7 C1751.8 250.8 1764.9 258.4 1778.1 266.3 C1791.4 274.2 1804.5 282.6 1817.6 291.1 C1830.7 299.6 1843.6 308.5 1856.6 317.5 C1869.6 326.6 1882.5 335.8 1895.5 345.2 C1908.5 354.5 1921.5 364.0 1934.5 373.6 C1947.5 383.1 1960.4 392.8 1973.3 402.4 C1986.2 412.1 1999.1 421.7 2011.8 431.3 C2024.6 440.8 2037.2 450.4 2049.7 459.8 C2062.1 469.2 2074.4 478.5 2086.4 487.6 C2098.4 496.6 2110.2 505.6 2121.6 514.2 C2132.9 522.8 2144.1 531.2 2154.7 539.2 C2165.2 547.1 2175.5 554.9 2184.9 562.1 C2194.3 569.2 2202.9 575.7 2211.1 581.9 C2219.3 588.1 2227.2 594.0 2234.2 599.3 C2241.3 604.6 2247.6 609.3 2253.4 613.7 C2259.2 618.1 2264.3 622.0 2269.0 625.5 C2273.6 629.1 2277.7 632.1 2281.4 635.0 C2285.1 637.8 2288.3 640.2 2291.3 642.4 C2294.3 644.6 2296.8 646.6 2299.3 648.4 C2301.7 650.3 2303.9 651.9 2305.9 653.5 C2307.9 655.0 2309.7 656.4 2311.4 657.6 C2313.0 658.8 2314.4 659.9 2315.7 660.8 C2317.0 661.8 2318.0 662.6 2319.0 663.3 C2319.9 664.0 2320.8 664.7 2321.5 665.2 C2322.2 665.8 2323.0 666.4 2323.3 666.6 Z"/></clipPath>
</defs>
<g clip-path="url(#locclip)">
<rect x="1528" y="195" width="916" height="695" fill="url(#lg1)"/>
<path d="M1691.8 841.4 L2263.8 626.7 L2400 626.7 L2400 900 L1600 900 Z" fill="url(#lg2)"/>
<path d="M1814.2 314.6 L2263.8 626.7 L2400 626.7 L2400 195 L1814.2 195 Z" fill="url(#lg3)"/>
<path d="M2263.8 626.7 L1814.2 314.6 L1691.8 841.4 Z" fill="url(#lg4)"/><path d="M2263.8 626.7 L1814.2 314.6 L1691.8 841.4 Z" fill="url(#lg5)"/>
</g></svg>
<canvas id="cie" class="b" style="left:1528px;top:195.2px" width="916" height="695"></canvas>
<div class="b" style="left:1527.00px;top:194.20px;width:918.00px;height:2.00px;background:#9c9c9c;"></div>
<div class="b" style="left:2443.00px;top:194.20px;width:2.00px;height:696.60px;background:#9c9c9c;"></div>
<div class="b" style="left:1527.00px;top:194.20px;width:2.00px;height:696.60px;background:#a8a8a8;"></div>
<div class="b" style="left:1527.00px;top:888.80px;width:918.00px;height:2.00px;background:#a8a8a8;"></div>
<div class="b" style="left:1527.00px;top:889.80px;width:2.00px;height:9.20px;background:#d8d8d8;"></div>
<div class="t" style="left:1522.42px;top:904.07px;font-size:20px;line-height:20px;color:#e6e6e6;">0</div>
<div class="b" style="left:1519.00px;top:888.80px;width:9.00px;height:2.00px;background:#d8d8d8;"></div>
<div class="t" style="left:1508.65px;top:880.67px;font-size:20px;line-height:20px;color:#e6e6e6;">0</div>
<div class="b" style="left:1635.95px;top:889.80px;width:2.00px;height:9.20px;background:#d8d8d8;"></div>
<div class="t" style="left:1623.12px;top:904.07px;font-size:20px;line-height:20px;color:#e6e6e6;">0,1</div>
<div class="b" style="left:1519.00px;top:806.14px;width:9.00px;height:2.00px;background:#d8d8d8;"></div>
<div class="t" style="left:1492.15px;top:798.01px;font-size:20px;line-height:20px;color:#e6e6e6;">0,1</div>
<div class="b" style="left:1744.90px;top:889.80px;width:2.00px;height:9.20px;background:#d8d8d8;"></div>
<div class="t" style="left:1732.10px;top:904.07px;font-size:20px;line-height:20px;color:#e6e6e6;">0,2</div>
<div class="b" style="left:1519.00px;top:723.48px;width:9.00px;height:2.00px;background:#d8d8d8;"></div>
<div class="t" style="left:1492.20px;top:715.35px;font-size:20px;line-height:20px;color:#e6e6e6;">0,2</div>
<div class="b" style="left:1853.85px;top:889.80px;width:2.00px;height:9.20px;background:#d8d8d8;"></div>
<div class="t" style="left:1840.97px;top:904.07px;font-size:20px;line-height:20px;color:#e6e6e6;">0,3</div>
<div class="b" style="left:1519.00px;top:640.82px;width:9.00px;height:2.00px;background:#d8d8d8;"></div>
<div class="t" style="left:1492.05px;top:632.69px;font-size:20px;line-height:20px;color:#e6e6e6;">0,3</div>
<div class="b" style="left:1962.80px;top:889.80px;width:2.00px;height:9.20px;background:#d8d8d8;"></div>
<div class="t" style="left:1949.77px;top:904.07px;font-size:20px;line-height:20px;color:#e6e6e6;">0,4</div>
<div class="b" style="left:1519.00px;top:558.16px;width:9.00px;height:2.00px;background:#d8d8d8;"></div>
<div class="t" style="left:1491.75px;top:550.03px;font-size:20px;line-height:20px;color:#e6e6e6;">0,4</div>
<div class="b" style="left:2071.75px;top:889.80px;width:2.00px;height:9.20px;background:#d8d8d8;"></div>
<div class="t" style="left:2058.85px;top:904.07px;font-size:20px;line-height:20px;color:#e6e6e6;">0,5</div>
<div class="b" style="left:1519.00px;top:475.50px;width:9.00px;height:2.00px;background:#d8d8d8;"></div>
<div class="t" style="left:1492.00px;top:467.37px;font-size:20px;line-height:20px;color:#e6e6e6;">0,5</div>
<div class="b" style="left:2180.70px;top:889.80px;width:2.00px;height:9.20px;background:#d8d8d8;"></div>
<div class="t" style="left:2167.82px;top:904.07px;font-size:20px;line-height:20px;color:#e6e6e6;">0,6</div>
<div class="b" style="left:1519.00px;top:392.84px;width:9.00px;height:2.00px;background:#d8d8d8;"></div>
<div class="t" style="left:1492.05px;top:384.71px;font-size:20px;line-height:20px;color:#e6e6e6;">0,6</div>
<div class="b" style="left:2289.65px;top:889.80px;width:2.00px;height:9.20px;background:#d8d8d8;"></div>
<div class="t" style="left:2276.85px;top:904.07px;font-size:20px;line-height:20px;color:#e6e6e6;">0,7</div>
<div class="b" style="left:1519.00px;top:310.18px;width:9.00px;height:2.00px;background:#d8d8d8;"></div>
<div class="t" style="left:1492.20px;top:302.05px;font-size:20px;line-height:20px;color:#e6e6e6;">0,7</div>
<div class="b" style="left:2398.60px;top:889.80px;width:2.00px;height:9.20px;background:#d8d8d8;"></div>
<div class="t" style="left:2385.72px;top:904.07px;font-size:20px;line-height:20px;color:#e6e6e6;">0,8</div>
<div class="b" style="left:1519.00px;top:227.52px;width:9.00px;height:2.00px;background:#d8d8d8;"></div>
<div class="t" style="left:1492.05px;top:219.39px;font-size:20px;line-height:20px;color:#e6e6e6;">0,8</div>
<div class="t" style="left:1913.20px;top:169.38px;font-size:22px;line-height:22px;color:#d4d4d4;transform:scaleX(0.9049);transform-origin:0 0;">CIE 1931 xy</div>
<div class="b" style="left:2120.50px;top:197.00px;width:318.50px;height:273.00px;background:#1e1e1e;"></div>
<div class="b" style="left:2124.70px;top:203.70px;width:310.60px;height:262.00px;background:#a0a0a0;"></div>
<div class="b" style="left:2127.00px;top:205.50px;width:306.00px;height:258.00px;background:radial-gradient(closest-side at 50% 50%,rgba(255,255,255,0.95),rgba(255,255,255,0) 100%),linear-gradient(135deg,#90ffc8,#d8fff0 35%,#ffe0f0 65%,#ff90b8),linear-gradient(45deg,#a8c8ff,#ffe8b0);"></div>
<canvas id="inset" class="b" style="left:2127px;top:205.5px" width="306" height="258"></canvas>
<div class="b" style="left:2083.00px;top:845.00px;width:355.30px;height:38.60px;background:#303030;"></div>
<div class="t" style="left:2082.61px;top:850.15px;font-size:29px;line-height:29px;color:#f4f4f4;transform:scaleX(0.9618);transform-origin:0 0;white-space:pre;">Gamut Coverage:  99,5%</div>
<svg class="b" style="left:0;top:0" width="2547" height="1380" viewBox="0 0 2547 1380"><rect x="1807.00" y="308.50" width="19" height="19" fill="none" stroke="#e8ffe8" stroke-width="2.2"/><rect x="2259.00" y="614.00" width="19" height="19" fill="none" stroke="#ffffff" stroke-width="2.2"/><rect x="1680.50" y="830.00" width="19" height="19" fill="none" stroke="#ffffff" stroke-width="2.2"/><rect x="1735.90" y="605.00" width="19" height="19" fill="none" stroke="#f0ffff" stroke-width="2.2"/><rect x="1859.00" y="608.50" width="19" height="19" fill="none" stroke="#000000" stroke-width="2.6"/><rect x="1884.00" y="755.00" width="19" height="19" fill="none" stroke="#ffe8ff" stroke-width="2.2"/><rect x="1996.00" y="435.00" width="19" height="19" fill="none" stroke="#ffffe0" stroke-width="2.2"/><circle cx="1813.00" cy="313.90" r="6.2" fill="#10a010" stroke="#000" stroke-width="1.8"/><circle cx="2263.00" cy="625.50" r="6.2" fill="#d01010" stroke="#000" stroke-width="1.8"/><circle cx="1691.40" cy="840.00" r="6.2" fill="#0008c8" stroke="#000050" stroke-width="1.8"/><circle cx="1743.90" cy="616.00" r="6.2" fill="#10b8b8" stroke="#000" stroke-width="1.8"/><circle cx="1866.60" cy="617.90" r="6.2" fill="#f8f8f8" stroke="#000" stroke-width="1.8"/><circle cx="1893.70" cy="763.90" r="6.2" fill="#9a10b0" stroke="#000" stroke-width="1.8"/><circle cx="2005.40" cy="444.80" r="6.2" fill="#b8c010" stroke="#000" stroke-width="1.8"/><rect x="2269.90" y="324.50" width="19" height="19" fill="none" stroke="#000000" stroke-width="4"/><circle cx="2277.00" cy="341.70" r="5.8" fill="#f0f0f0" stroke="#000" stroke-width="1.6"/></svg>
<div class="t" style="left:119.56px;top:988.15px;font-size:42px;line-height:42px;color:#f4f4f4;transform:scaleX(1.0199);transform-origin:0 0;">Current Reading</div>
<div class="t" style="left:121.26px;top:1053.95px;font-size:35.5px;line-height:35.5px;color:#f4f4f4;transform:scaleX(0.9967);transform-origin:0 0;">x: 0,3122</div>
<div class="t" style="left:120.91px;top:1112.35px;font-size:35.5px;line-height:35.5px;color:#f4f4f4;transform:scaleX(1.0091);transform-origin:0 0;">y: 0,3275</div>
<div class="t" style="left:121.67px;top:1168.75px;font-size:35.5px;line-height:35.5px;color:#f4f4f4;">fL: 184,46</div>
<div class="t" style="left:120.12px;top:1226.95px;font-size:35.5px;line-height:35.5px;color:#f4f4f4;transform:scaleX(1.0444);transform-origin:0 0;">cd/m²: 632,01</div>
<div class="t" style="left:700.98px;top:969.38px;font-size:22px;line-height:22px;color:#d4d4d4;transform:scaleX(0.8942);transform-origin:0 0;">RGB Balance</div>
<div class="b" style="left:605.00px;top:995.20px;width:354.00px;height:254.60px;background:#232323;"></div>
<div class="b" style="left:605.00px;top:1021.20px;width:354.00px;height:2.00px;background:#9c9c9c;"></div>
<div class="b" style="left:596.50px;top:1021.20px;width:8.50px;height:2.00px;background:#d8d8d8;"></div>
<div class="t" style="left:561.76px;top:1011.72px;font-size:21px;line-height:21px;color:#e6e6e6;">104</div>
<div class="b" style="left:605.00px;top:1073.00px;width:354.00px;height:2.00px;background:#9c9c9c;"></div>
<div class="b" style="left:596.50px;top:1073.00px;width:8.50px;height:2.00px;background:#d8d8d8;"></div>
<div class="t" style="left:562.23px;top:1063.52px;font-size:21px;line-height:21px;color:#e6e6e6;">102</div>
<div class="b" style="left:605.00px;top:1123.30px;width:354.00px;height:2.00px;background:#9c9c9c;"></div>
<div class="b" style="left:596.50px;top:1123.30px;width:8.50px;height:2.00px;background:#d8d8d8;"></div>
<div class="t" style="left:561.97px;top:1113.82px;font-size:21px;line-height:21px;color:#e6e6e6;">100</div>
<div class="b" style="left:605.00px;top:1175.00px;width:354.00px;height:2.00px;background:#9c9c9c;"></div>
<div class="b" style="left:596.50px;top:1175.00px;width:8.50px;height:2.00px;background:#d8d8d8;"></div>
<div class="t" style="left:573.78px;top:1165.52px;font-size:21px;line-height:21px;color:#e6e6e6;">98</div>
<div class="b" style="left:605.00px;top:1224.90px;width:354.00px;height:2.00px;background:#9c9c9c;"></div>
<div class="b" style="left:596.50px;top:1224.90px;width:8.50px;height:2.00px;background:#d8d8d8;"></div>
<div class="t" style="left:573.78px;top:1215.42px;font-size:21px;line-height:21px;color:#e6e6e6;">96</div>
<div class="b" style="left:604.00px;top:994.20px;width:356.00px;height:2.00px;background:#9c9c9c;"></div>
<div class="b" style="left:958.00px;top:994.20px;width:2.00px;height:256.60px;background:#9c9c9c;"></div>
<div class="b" style="left:604.00px;top:994.20px;width:2.00px;height:256.60px;background:#a8a8a8;"></div>
<div class="b" style="left:640.00px;top:1121.40px;width:93.00px;height:128.40px;background:#000;"></div>
<div class="b" style="left:642.00px;top:1123.40px;width:89.00px;height:126.40px;background:linear-gradient(#ff5050,#ff3c3c);"></div>
<div class="b" style="left:732.80px;top:1125.00px;width:95.20px;height:124.80px;background:#000;"></div>
<div class="b" style="left:734.80px;top:1127.00px;width:91.20px;height:122.80px;background:linear-gradient(#5aac5a,#44a044);"></div>
<div class="b" style="left:827.50px;top:1110.60px;width:94.50px;height:139.20px;background:#000;"></div>
<div class="b" style="left:829.50px;top:1112.60px;width:90.50px;height:137.20px;background:linear-gradient(#5252ff,#4040ff);"></div>
<div class="b" style="left:604.00px;top:1248.80px;width:356.00px;height:2.00px;background:#a8a8a8;"></div>
<div class="b" style="left:604.00px;top:1249.80px;width:2.00px;height:7.90px;background:#d8d8d8;"></div>
<div class="b" style="left:958.00px;top:1249.80px;width:2.00px;height:7.90px;background:#d8d8d8;"></div>
<div class="t" style="left:753.45px;top:1255.02px;font-size:21px;line-height:21px;color:#e6e6e6;transform:scaleX(1.0135);transform-origin:0 0;">100W</div>
<div class="b" style="left:987.10px;top:959.90px;width:986.90px;height:312.90px;background:#000;"></div>
<div class="b" style="left:988.90px;top:962.20px;width:983.30px;height:28.30px;background:#333333;"></div>
<div class="b" style="left:988.90px;top:990.50px;width:983.30px;height:26.80px;background:#171717;"></div>
<div class="b" style="left:988.90px;top:1017.00px;width:983.30px;height:51.00px;background:#424242;box-shadow:inset 0 1px 0 #4a4a4a;"></div>
<div class="t" style="left:1007.13px;top:1027.26px;font-size:33.6px;line-height:33.6px;color:#f4f4f4;font-weight:bold;transform:scaleX(0.6630);transform-origin:0 0;">x: CIE31</div>
<div class="t" style="left:1125.66px;top:1027.77px;font-size:33px;line-height:33px;color:#f4f4f4;transform:scaleX(0.7133);transform-origin:0 0;">0,3124</div>
<div class="t" style="left:1235.36px;top:1027.77px;font-size:33px;line-height:33px;color:#f4f4f4;transform:scaleX(0.7133);transform-origin:0 0;">0,6754</div>
<div class="t" style="left:1331.96px;top:1027.77px;font-size:33px;line-height:33px;color:#f4f4f4;transform:scaleX(0.7133);transform-origin:0 0;">0,2627</div>
<div class="t" style="left:1441.36px;top:1027.77px;font-size:33px;line-height:33px;color:#f4f4f4;transform:scaleX(0.7133);transform-origin:0 0;">0,1503</div>
<div class="t" style="left:1538.16px;top:1027.77px;font-size:33px;line-height:33px;color:#f4f4f4;transform:scaleX(0.7133);transform-origin:0 0;">0,1982</div>
<div class="t" style="left:1648.36px;top:1027.77px;font-size:33px;line-height:33px;color:#f4f4f4;transform:scaleX(0.7133);transform-origin:0 0;">0,3356</div>
<div class="t" style="left:1757.96px;top:1027.77px;font-size:33px;line-height:33px;color:#f4f4f4;transform:scaleX(0.7133);transform-origin:0 0;">0,4383</div>
<div class="t" style="left:1868.06px;top:1027.77px;font-size:33px;line-height:33px;color:#f4f4f4;transform:scaleX(0.7133);transform-origin:0 0;">0,3122</div>
<div class="b" style="left:988.90px;top:1068.00px;width:983.30px;height:52.00px;background:linear-gradient(to right,#7a7a7a,#888888 20%,#7e7e7e 50%,#848484 80%,#888888);"></div>
<div class="t" style="left:1007.13px;top:1078.26px;font-size:33.6px;line-height:33.6px;color:#f4f4f4;font-weight:bold;transform:scaleX(0.6736);transform-origin:0 0;">y: CIE31</div>
<div class="t" style="left:1125.66px;top:1078.77px;font-size:33px;line-height:33px;color:#f4f4f4;transform:scaleX(0.7133);transform-origin:0 0;">0,3273</div>
<div class="t" style="left:1235.36px;top:1078.77px;font-size:33px;line-height:33px;color:#f4f4f4;transform:scaleX(0.7133);transform-origin:0 0;">0,3183</div>
<div class="t" style="left:1331.96px;top:1078.77px;font-size:33px;line-height:33px;color:#f4f4f4;transform:scaleX(0.7133);transform-origin:0 0;">0,6959</div>
<div class="t" style="left:1441.36px;top:1078.77px;font-size:33px;line-height:33px;color:#f4f4f4;transform:scaleX(0.7133);transform-origin:0 0;">0,0586</div>
<div class="t" style="left:1538.16px;top:1078.77px;font-size:33px;line-height:33px;color:#f4f4f4;transform:scaleX(0.7133);transform-origin:0 0;">0,3294</div>
<div class="t" style="left:1648.36px;top:1078.77px;font-size:33px;line-height:33px;color:#f4f4f4;transform:scaleX(0.7133);transform-origin:0 0;">0,1504</div>
<div class="t" style="left:1757.96px;top:1078.77px;font-size:33px;line-height:33px;color:#f4f4f4;transform:scaleX(0.7133);transform-origin:0 0;">0,5361</div>
<div class="t" style="left:1868.06px;top:1078.77px;font-size:33px;line-height:33px;color:#f4f4f4;transform:scaleX(0.7133);transform-origin:0 0;">0,3275</div>
<div class="b" style="left:988.90px;top:1120.00px;width:983.30px;height:51.00px;background:#424242;box-shadow:inset 0 1px 0 #4a4a4a;"></div>
<div class="t" style="left:1006.92px;top:1130.26px;font-size:33.6px;line-height:33.6px;color:#f4f4f4;font-weight:bold;transform:scaleX(0.6494);transform-origin:0 0;">Y</div>
<div class="t" style="left:1125.72px;top:1130.77px;font-size:33px;line-height:33px;color:#f4f4f4;transform:scaleX(0.7133);transform-origin:0 0;">333,6997</div>
<div class="t" style="left:1235.12px;top:1130.77px;font-size:33px;line-height:33px;color:#f4f4f4;transform:scaleX(0.7133);transform-origin:0 0;">76,7651</div>
<div class="t" style="left:1331.72px;top:1130.77px;font-size:33px;line-height:33px;color:#f4f4f4;transform:scaleX(0.7133);transform-origin:0 0;">228,2620</div>
<div class="t" style="left:1441.12px;top:1130.77px;font-size:33px;line-height:33px;color:#f4f4f4;transform:scaleX(0.7133);transform-origin:0 0;">26,0224</div>
<div class="t" style="left:1537.92px;top:1130.77px;font-size:33px;line-height:33px;color:#f4f4f4;transform:scaleX(0.7133);transform-origin:0 0;">255,2824</div>
<div class="t" style="left:1647.53px;top:1130.77px;font-size:33px;line-height:33px;color:#f4f4f4;transform:scaleX(0.7133);transform-origin:0 0;">103,1655</div>
<div class="t" style="left:1758.02px;top:1130.77px;font-size:33px;line-height:33px;color:#f4f4f4;transform:scaleX(0.7133);transform-origin:0 0;">305,4080</div>
<div class="t" style="left:1867.82px;top:1130.77px;font-size:33px;line-height:33px;color:#f4f4f4;transform:scaleX(0.7133);transform-origin:0 0;">632,0126</div>
<div class="b" style="left:988.90px;top:1171.00px;width:983.30px;height:51.00px;background:linear-gradient(to right,#7a7a7a,#888888 20%,#7e7e7e 50%,#848484 80%,#888888);"></div>
<div class="t" style="left:1007.06px;top:1181.26px;font-size:33.6px;line-height:33.6px;color:#f4f4f4;font-weight:bold;transform:scaleX(0.7160);transform-origin:0 0;">Target Y</div>
<div class="t" style="left:1125.72px;top:1181.77px;font-size:33px;line-height:33px;color:#f4f4f4;transform:scaleX(0.7133);transform-origin:0 0;">329,2758</div>
<div class="t" style="left:1235.12px;top:1181.77px;font-size:33px;line-height:33px;color:#f4f4f4;transform:scaleX(0.7133);transform-origin:0 0;">75,4005</div>
<div class="t" style="left:1331.72px;top:1181.77px;font-size:33px;line-height:33px;color:#f4f4f4;transform:scaleX(0.7133);transform-origin:0 0;">227,7702</div>
<div class="t" style="left:1441.12px;top:1181.77px;font-size:33px;line-height:33px;color:#f4f4f4;transform:scaleX(0.7133);transform-origin:0 0;">26,1051</div>
<div class="t" style="left:1537.92px;top:1181.77px;font-size:33px;line-height:33px;color:#f4f4f4;transform:scaleX(0.7133);transform-origin:0 0;">253,8753</div>
<div class="t" style="left:1647.53px;top:1181.77px;font-size:33px;line-height:33px;color:#f4f4f4;transform:scaleX(0.7133);transform-origin:0 0;">101,5056</div>
<div class="t" style="left:1758.02px;top:1181.77px;font-size:33px;line-height:33px;color:#f4f4f4;transform:scaleX(0.7133);transform-origin:0 0;">303,1707</div>
<div class="t" style="left:1867.82px;top:1181.77px;font-size:33px;line-height:33px;color:#f4f4f4;transform:scaleX(0.7133);transform-origin:0 0;">632,0126</div>
<div class="b" style="left:988.90px;top:1222.00px;width:983.30px;height:51.00px;background:#424242;box-shadow:inset 0 1px 0 #4a4a4a;"></div>
<div class="t" style="left:1006.32px;top:1232.26px;font-size:33.6px;line-height:33.6px;color:#f4f4f4;font-weight:bold;transform:scaleX(0.7269);transform-origin:0 0;">ΔE 2000</div>
<div class="t" style="left:1124.83px;top:1232.77px;font-size:33px;line-height:33px;color:#f4f4f4;transform:scaleX(0.7133);transform-origin:0 0;">1,0615</div>
<div class="t" style="left:1234.53px;top:1232.77px;font-size:33px;line-height:33px;color:#f4f4f4;transform:scaleX(0.7133);transform-origin:0 0;">1,2013</div>
<div class="t" style="left:1331.96px;top:1232.77px;font-size:33px;line-height:33px;color:#f4f4f4;transform:scaleX(0.7133);transform-origin:0 0;">0,3514</div>
<div class="t" style="left:1441.36px;top:1232.77px;font-size:33px;line-height:33px;color:#f4f4f4;transform:scaleX(0.7133);transform-origin:0 0;">0,4842</div>
<div class="t" style="left:1538.16px;top:1232.77px;font-size:33px;line-height:33px;color:#f4f4f4;transform:scaleX(0.7133);transform-origin:0 0;">0,4664</div>
<div class="t" style="left:1648.36px;top:1232.77px;font-size:33px;line-height:33px;color:#f4f4f4;transform:scaleX(0.7133);transform-origin:0 0;">0,4109</div>
<div class="t" style="left:1757.96px;top:1232.77px;font-size:33px;line-height:33px;color:#f4f4f4;transform:scaleX(0.7133);transform-origin:0 0;">0,2199</div>
<div class="t" style="left:1868.06px;top:1232.77px;font-size:33px;line-height:33px;color:#f4f4f4;transform:scaleX(0.7133);transform-origin:0 0;">0,9623</div>
<div class="t" style="left:1145.28px;top:977.49px;font-size:28.6px;line-height:28.6px;color:#f4f4f4;transform:scaleX(0.8171);transform-origin:0 0;">White</div>
<div class="t" style="left:1255.35px;top:977.49px;font-size:28.6px;line-height:28.6px;color:#f4f4f4;transform:scaleX(0.8171);transform-origin:0 0;">Red</div>
<div class="t" style="left:1348.69px;top:977.49px;font-size:28.6px;line-height:28.6px;color:#f4f4f4;transform:scaleX(0.8171);transform-origin:0 0;">Green</div>
<div class="t" style="left:1460.86px;top:977.49px;font-size:28.6px;line-height:28.6px;color:#f4f4f4;transform:scaleX(0.8171);transform-origin:0 0;">Blue</div>
<div class="t" style="left:1560.59px;top:977.49px;font-size:28.6px;line-height:28.6px;color:#f4f4f4;transform:scaleX(0.8171);transform-origin:0 0;">Cyan</div>
<div class="t" style="left:1650.85px;top:977.49px;font-size:28.6px;line-height:28.6px;color:#f4f4f4;transform:scaleX(0.8171);transform-origin:0 0;">Magenta</div>
<div class="t" style="left:1773.35px;top:977.49px;font-size:28.6px;line-height:28.6px;color:#f4f4f4;transform:scaleX(0.8171);transform-origin:0 0;">Yellow</div>
<div class="t" style="left:1885.96px;top:977.49px;font-size:28.6px;line-height:28.6px;color:#f4f4f4;transform:scaleX(0.8171);transform-origin:0 0;">100W</div>
<div class="b" style="left:0.00px;top:1286.50px;width:2547.00px;height:93.50px;background:#2a2a2a;"></div>
<div class="b" style="left:1.4px;top:1287.2px;width:224.6px;height:90.5px;border-radius:6px;background:linear-gradient(#adadad,#9a9a9a 20%,#808080 60%,#5c5c5c);"></div>
<div class="b" style="left:8.9px;top:1294.8px;width:209.6px;height:53.6px;border-radius:5px;background:#c2c2c2;box-shadow:inset 0 2px 2px rgba(0,0,0,0.35), 0 0 0 1px rgba(255,255,255,0.25);"></div>
<div class="t" style="left:90.86px;top:1357.81px;font-size:17px;line-height:17px;color:#2a2a2a;font-weight:bold;">White</div>
<div class="b" style="left:229.5px;top:1287.2px;width:224.6px;height:90.5px;border-radius:6px;background:linear-gradient(#adadad,#9a9a9a 20%,#808080 60%,#5c5c5c);"></div>
<div class="b" style="left:237.0px;top:1294.8px;width:209.6px;height:53.6px;border-radius:5px;background:#c00000;box-shadow:inset 0 2px 2px rgba(0,0,0,0.35), 0 0 0 1px rgba(255,255,255,0.25);"></div>
<div class="t" style="left:325.74px;top:1357.81px;font-size:17px;line-height:17px;color:#2a2a2a;font-weight:bold;">Red</div>
<div class="b" style="left:457.5px;top:1287.2px;width:224.6px;height:90.5px;border-radius:6px;background:linear-gradient(#adadad,#9a9a9a 20%,#808080 60%,#5c5c5c);"></div>
<div class="b" style="left:465.0px;top:1294.8px;width:209.6px;height:53.6px;border-radius:5px;background:#00c000;box-shadow:inset 0 2px 2px rgba(0,0,0,0.35), 0 0 0 1px rgba(255,255,255,0.25);"></div>
<div class="t" style="left:545.40px;top:1357.81px;font-size:17px;line-height:17px;color:#2a2a2a;font-weight:bold;">Green</div>
<div class="b" style="left:685.5px;top:1287.2px;width:224.6px;height:90.5px;border-radius:6px;background:linear-gradient(#adadad,#9a9a9a 20%,#808080 60%,#5c5c5c);"></div>
<div class="b" style="left:693.0px;top:1294.8px;width:209.6px;height:53.6px;border-radius:5px;background:#0000c0;box-shadow:inset 0 2px 2px rgba(0,0,0,0.35), 0 0 0 1px rgba(255,255,255,0.25);"></div>
<div class="t" style="left:779.10px;top:1357.81px;font-size:17px;line-height:17px;color:#2a2a2a;font-weight:bold;">Blue</div>
<div class="b" style="left:913.5px;top:1287.2px;width:224.6px;height:90.5px;border-radius:6px;background:linear-gradient(#adadad,#9a9a9a 20%,#808080 60%,#5c5c5c);"></div>
<div class="b" style="left:921.0px;top:1294.8px;width:209.6px;height:53.6px;border-radius:5px;background:#00c0c0;box-shadow:inset 0 2px 2px rgba(0,0,0,0.35), 0 0 0 1px rgba(255,255,255,0.25);"></div>
<div class="t" style="left:1005.19px;top:1357.81px;font-size:17px;line-height:17px;color:#2a2a2a;font-weight:bold;">Cyan</div>
<div class="b" style="left:1141.5px;top:1287.2px;width:224.6px;height:90.5px;border-radius:6px;background:linear-gradient(#adadad,#9a9a9a 20%,#808080 60%,#5c5c5c);"></div>
<div class="b" style="left:1149.0px;top:1294.8px;width:209.6px;height:53.6px;border-radius:5px;background:#c000c0;box-shadow:inset 0 2px 2px rgba(0,0,0,0.35), 0 0 0 1px rgba(255,255,255,0.25);"></div>
<div class="t" style="left:1218.69px;top:1357.81px;font-size:17px;line-height:17px;color:#2a2a2a;font-weight:bold;">Magenta</div>
<div class="b" style="left:1369.8px;top:1287.2px;width:224.6px;height:90.5px;border-radius:6px;background:linear-gradient(#adadad,#9a9a9a 20%,#808080 60%,#5c5c5c);"></div>
<div class="b" style="left:1377.3px;top:1294.8px;width:209.6px;height:53.6px;border-radius:5px;background:#c4c400;box-shadow:inset 0 2px 2px rgba(0,0,0,0.35), 0 0 0 1px rgba(255,255,255,0.25);"></div>
<div class="t" style="left:1455.47px;top:1357.81px;font-size:17px;line-height:17px;color:#2a2a2a;font-weight:bold;">Yellow</div>
<div class="b" style="left:1597.9px;top:1287.2px;width:224.2px;height:90.5px;border-radius:6px;background:linear-gradient(#1a1a1a,#262626 30%,#343434);"></div>
<div class="b" style="left:1605px;top:1294px;width:210px;height:54.3px;border-radius:6px;background:#ffffff;box-shadow:inset 0 2px 2px rgba(0,0,0,0.3);"></div>
<div class="t" style="left:1687.28px;top:1357.81px;font-size:17px;line-height:17px;color:#f4f4f4;font-weight:bold;">100W</div>
<div class="b" style="left:1822.10px;top:1286.50px;width:252.20px;height:93.50px;background:linear-gradient(#3a3a3a,#424242 30%,#2a2a2a 80%,#1e1e1e);"></div>
<div class="b" style="left:2075.3px;top:1286.8px;width:72.7px;height:91.2px;border-radius:7px;background:linear-gradient(#b0b0b0,#8a8a8a 30%,#9a9a9a 32%,#6c6c6c);"></div>
<div class="b" style="left:2075.30px;top:1313.80px;width:72.70px;height:1.40px;background:#2e2e2e;"></div>
<div class="b" style="left:2099px;top:1290px;width:24px;height:24px;border-radius:50%;background:radial-gradient(circle at 50% 70%,#a0a0a0,#7a7a7a 60%,#6e6e6e);"></div>
<svg class="b" style="left:2102px;top:1294px" width="18" height="12" viewBox="0 0 18 12"><path d="M1.5 10 H16.5 L9 2 Z" fill="#2a2a2a"/></svg>
<div class="b" style="left:2089px;top:1323px;width:42px;height:43px;border-radius:7px;border:3px solid #1a1a1a;background:linear-gradient(#c8c8c8,#b0b0b0 50%,#a8a8a8 52%,#9a9a9a);"></div>
<div class="b" style="left:2101.00px;top:1336.50px;width:21.00px;height:20.50px;background:#0a0a0a;"></div>
<div class="b" style="left:2149.30px;top:1286.80px;width:68.20px;height:45.30px;background:linear-gradient(#b4b4b4,#9a9a9a 50%,#7a7a7a);"></div>
<div class="b" style="left:2168.8px;top:1294px;width:30px;height:30px;border-radius:50%;background:radial-gradient(circle at 50% 75%,#b0b0b0,#8a8a8a 65%,#7e7e7e);"></div>
<div class="b" style="left:2218.30px;top:1286.80px;width:66.50px;height:45.30px;background:linear-gradient(#b4b4b4,#9a9a9a 50%,#7a7a7a);"></div>
<div class="b" style="left:2236.95px;top:1294px;width:30px;height:30px;border-radius:50%;background:radial-gradient(circle at 50% 75%,#b0b0b0,#8a8a8a 65%,#7e7e7e);"></div>
<div class="b" style="left:2285.60px;top:1286.80px;width:66.70px;height:45.30px;background:linear-gradient(#7a7a7a,#5a5a5a);"></div>
<div class="b" style="left:2304.35px;top:1294px;width:30px;height:30px;border-radius:50%;background:radial-gradient(circle at 50% 75%,#7a7a7a,#555 65%,#4a4a4a);"></div>
<div class="b" style="left:2353.10px;top:1286.80px;width:67.10px;height:45.30px;background:linear-gradient(#b4b4b4,#9a9a9a 50%,#7a7a7a);"></div>
<div class="b" style="left:2372.05px;top:1294px;width:30px;height:30px;border-radius:50%;background:radial-gradient(circle at 50% 75%,#b0b0b0,#8a8a8a 65%,#7e7e7e);"></div>
<div class="b" style="left:2421.00px;top:1286.80px;width:66.10px;height:45.30px;background:linear-gradient(#b4b4b4,#9a9a9a 50%,#7a7a7a);"></div>
<div class="b" style="left:2439.45px;top:1294px;width:30px;height:30px;border-radius:50%;background:radial-gradient(circle at 50% 75%,#b0b0b0,#8a8a8a 65%,#7e7e7e);"></div>
<svg class="b" style="left:2171.8px;top:1297px" width="24" height="24" viewBox="-12 -12 24 24"><rect x="-6.5" y="-6.5" width="13" height="13" fill="#2a2a2a"/></svg>
<svg class="b" style="left:2239.95px;top:1297px" width="24" height="24" viewBox="-12 -12 24 24"><path d="M-6 -8 L8 0 L-6 8 Z" fill="#2a2a2a"/></svg>
<svg class="b" style="left:2307.35px;top:1297px" width="24" height="24" viewBox="-12 -12 24 24"><path d="M-6 -8 H-9 V8 H-6 M6 -8 H9 V8 H6" fill="none" stroke="#2a2a2a" stroke-width="2.2"/><circle cx="-2.5" cy="0" r="1.2" fill="#2a2a2a"/><circle cx="2.5" cy="0" r="1.2" fill="#2a2a2a"/></svg>
<svg class="b" style="left:2375.05px;top:1297px" width="24" height="24" viewBox="-12 -12 24 24"><path d="M0 0 C-3 -5 -10 -5 -10 0 C-10 5 -3 5 0 0 C3 -5 10 -5 10 0 C10 5 3 5 0 0 Z" fill="none" stroke="#2a2a2a" stroke-width="2.4"/></svg>
<svg class="b" style="left:2442.45px;top:1297px" width="24" height="24" viewBox="-12 -12 24 24"><path d="M-7 -1 A7 7 0 0 1 5 -5 M7 1 A7 7 0 0 1 -5 5" fill="none" stroke="#2a2a2a" stroke-width="2.6"/><path d="M3 -9 L8 -4 L2 -2 Z M-3 9 L-8 4 L-2 2 Z" fill="#2a2a2a"/></svg>
<div class="b" style="left:2149.30px;top:1333.10px;width:203.20px;height:46.90px;background:linear-gradient(#b8b8b8,#a0a0a0 40%,#8a8a8a);"></div>
<div class="b" style="left:2353.50px;top:1333.10px;width:193.50px;height:46.90px;background:linear-gradient(#b8b8b8,#a0a0a0 40%,#8a8a8a);"></div>
<div class="b" style="left:2352.50px;top:1333.10px;width:1.00px;height:46.90px;background:#3a3a3a;"></div>
<div class="b" style="left:2180.4px;top:1341px;width:30px;height:30px;border-radius:50%;background:radial-gradient(circle at 50% 75%,#b8b8b8,#909090 65%,#888);"></div>
<div class="b" style="left:2499px;top:1341px;width:30px;height:30px;border-radius:50%;background:radial-gradient(circle at 50% 75%,#b8b8b8,#909090 65%,#888);"></div>
<div class="t" style="left:2188.15px;top:1343.99px;font-size:26px;line-height:26px;color:#3a3a3a;font-weight:bold;">«</div>
<div class="t" style="left:2506.75px;top:1343.99px;font-size:26px;line-height:26px;color:#3a3a3a;font-weight:bold;">»</div>
<div class="t" style="left:2233.32px;top:1339.72px;font-size:34px;line-height:34px;color:#333333;font-weight:bold;transform:scaleX(0.9488);transform-origin:0 0;">Back</div>
<div class="t" style="left:2393.51px;top:1339.72px;font-size:34px;line-height:34px;color:#333333;font-weight:bold;transform:scaleX(1.0849);transform-origin:0 0;">Next</div>
<div class="b" style="left:2488.00px;top:1286.50px;width:59.00px;height:46.00px;background:#323232;"></div>
<svg class="b" style="left:2498px;top:1285px" width="46" height="46" viewBox="-23 -23 46 46"><g stroke="#e00000" stroke-width="7" stroke-linecap="butt">
<line x1="0" y1="-19" x2="0" y2="19"/><line x1="-16.5" y1="-9.5" x2="16.5" y2="9.5"/><line x1="-16.5" y1="9.5" x2="16.5" y2="-9.5"/></g></svg>
<script>(function(){
var GAM=1.0;
var LOC=[[0.1741,0.0050],[0.1740,0.0050],[0.1738,0.0049],[0.1736,0.0049],[0.1733,0.0048],[0.1730,0.0048],[0.1726,0.0048],[0.1721,0.0048],[0.1714,0.0051],[0.1703,0.0058],[0.1689,0.0069],[0.1669,0.0086],[0.1644,0.0109],[0.1611,0.0138],[0.1566,0.0177],[0.1510,0.0227],[0.1440,0.0297],[0.1355,0.0399],[0.1241,0.0578],[0.1096,0.0868],[0.0913,0.1327],[0.0687,0.2007],[0.0454,0.2950],[0.0235,0.4127],[0.0082,0.5384],[0.0039,0.6548],[0.0139,0.7502],[0.0389,0.8120],[0.0743,0.8338],[0.1142,0.8262],[0.1547,0.8059],[0.1929,0.7816],[0.2296,0.7543],[0.2658,0.7243],[0.3016,0.6923],[0.3373,0.6589],[0.3731,0.6245],[0.4087,0.5896],[0.4441,0.5547],[0.4788,0.5202],[0.5125,0.4866],[0.5448,0.4544],[0.5752,0.4242],[0.6029,0.3965],[0.6270,0.3725],[0.6482,0.3514],[0.6658,0.3340],[0.6801,0.3197],[0.6915,0.3083],[0.7006,0.2993],[0.7079,0.2920],[0.7140,0.2859],[0.7190,0.2809],[0.7230,0.2770],[0.7260,0.2740],[0.7283,0.2717],[0.7300,0.2700]];
var OX=1528, OY=195.2;
function XP(x){return 1528+x*1089.5-OX;}
function YP(y){return 889.8-y*826.6-OY;}
var M=[[2.4934969,-0.9313836,-0.4027108],[-0.8294890,1.7626641,0.0236247],[0.0358458,-0.0761724,0.9568845]];
var TRI=[[0.6754,0.3183],[0.2627,0.6959],[0.1503,0.0586]];
function col(x,y,dim,out,o){
  if(y<=0.0005){y=0.0005;}
  var X=x/y, Y=1, Z=(1-x-y)/y;
  var r=M[0][0]*X+M[0][1]*Y+M[0][2]*Z;
  var g=M[1][0]*X+M[1][1]*Y+M[1][2]*Z;
  var b=M[2][0]*X+M[2][1]*Y+M[2][2]*Z;
  if(r<0)r=0; if(g<0)g=0; if(b<0)b=0;
  var m=Math.max(r,g,b); if(m<=0)m=1;
  r/=m; g/=m; b/=m;
  r=Math.pow(r,GAM); g=Math.pow(g,GAM); b=Math.pow(b,GAM);
  out[o]=r*255*dim; out[o+1]=g*255*dim; out[o+2]=b*255*dim; out[o+3]=255;
}
function pathLocus(ctx){
  var P=LOC.map(function(p){return [XP(p[0]),YP(p[1])];});
  ctx.beginPath();
  ctx.moveTo(P[0][0],P[0][1]);
  var n=P.length;
  for(var i=0;i<n-1;i++){
    var p0=P[Math.max(0,i-1)], p1=P[i], p2=P[i+1], p3=P[Math.min(n-1,i+2)];
    var c1x=p1[0]+(p2[0]-p0[0])/6, c1y=p1[1]+(p2[1]-p0[1])/6;
    var c2x=p2[0]-(p3[0]-p1[0])/6, c2y=p2[1]-(p3[1]-p1[1])/6;
    ctx.bezierCurveTo(c1x,c1y,c2x,c2y,p2[0],p2[1]);
  }
  ctx.closePath();
}
var cv=document.getElementById('cie');
if(cv){
  var W=cv.width,H=cv.height,ctx=cv.getContext('2d');
  function mk(dim){
    var c=document.createElement('canvas');c.width=W;c.height=H;
    var cx=c.getContext('2d'); var im=cx.createImageData(W,H); var d=im.data;
    for(var py=0;py<H;py++){
      var y=(889.8-(py+0.5+OY))/826.6;
      for(var px=0;px<W;px++){
        var x=(px+0.5+OX-1528)/1089.5;
        col(x,y,dim,d,(py*W+px)*4);
      }
    }
    cx.putImageData(im,0,0); return c;
  }
  var dimC=mk(0.60), brC=mk(1.0);
  ctx.save(); pathLocus(ctx); ctx.clip(); ctx.drawImage(dimC,0,0); ctx.restore();
  ctx.save(); ctx.beginPath();
  ctx.moveTo(XP(TRI[0][0]),YP(TRI[0][1])); ctx.lineTo(XP(TRI[1][0]),YP(TRI[1][1])); ctx.lineTo(XP(TRI[2][0]),YP(TRI[2][1])); ctx.closePath();
  ctx.clip(); ctx.drawImage(brC,0,0); ctx.restore();
}
var iv=document.getElementById('inset');
if(iv){
  var W2=iv.width,H2=iv.height,c2=iv.getContext('2d');
  var im2=c2.createImageData(W2,H2), d2=im2.data;
  var cxp=2279.4-2127, cyp=334-205.5, S=3800;
  for(var py=0;py<H2;py++){
    for(var px=0;px<W2;px++){
      var x=0.3127+(px+0.5-cxp)/S, y=0.3290-(py+0.5-cyp)/S;
      col(x,y,1.0,d2,(py*W2+px)*4);
    }
  }
  c2.putImageData(im2,0,0);
}
})();
</script>
</body></html>
